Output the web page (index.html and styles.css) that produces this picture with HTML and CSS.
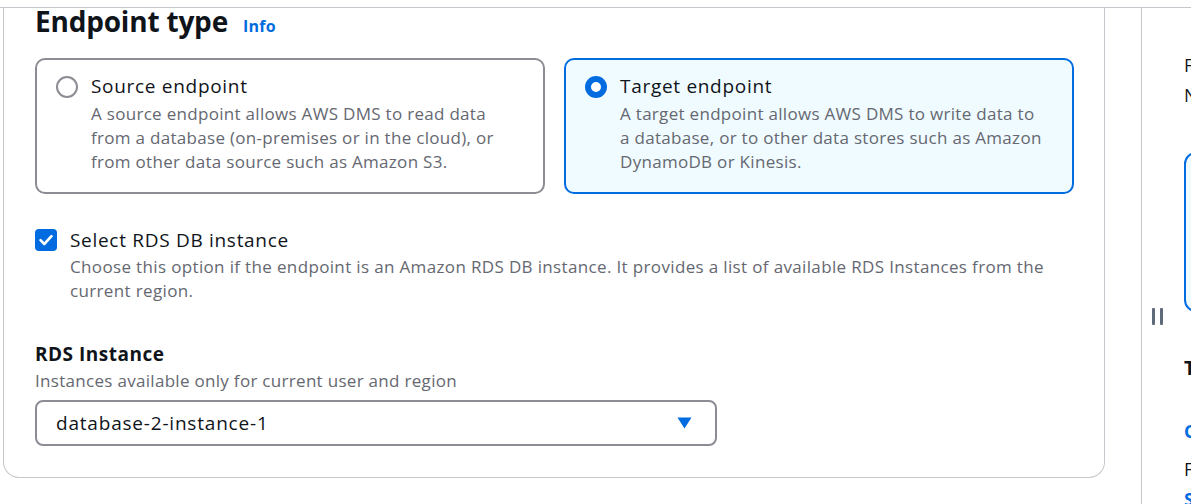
FILE: index.html
```html
<!DOCTYPE html>
<html lang="en">
<head>
<meta charset="utf-8">
<title>Endpoint type</title>
<link rel="stylesheet" href="styles.css">
</head>
<body>
<div class="page">
  <main class="main">
    <section class="container">
      <h2 class="heading">Endpoint type <a class="info" href="#">Info</a></h2>

      <div class="tiles">
        <label class="tile">
          <span class="radio"></span>
          <span class="tile-body">
            <span class="tile-title">Source endpoint</span>
            <span class="tile-desc">A source endpoint allows AWS DMS to read data from a database (on-premises or in the cloud), or from other data source such as Amazon S3.</span>
          </span>
        </label>
        <label class="tile tile-selected">
          <span class="radio radio-checked"></span>
          <span class="tile-body">
            <span class="tile-title">Target endpoint</span>
            <span class="tile-desc">A target endpoint allows AWS DMS to write data to a database, or to other data stores such as Amazon DynamoDB or Kinesis.</span>
          </span>
        </label>
      </div>

      <div class="check-row">
        <span class="checkbox">
          <svg width="22" height="22" viewBox="0 0 22 22"><path d="M5.5 11.2 L9.3 15 L16.5 7.2" fill="none" stroke="#ffffff" stroke-width="2.6" stroke-linecap="round" stroke-linejoin="round"/></svg>
        </span>
        <div class="check-body">
          <div class="check-label">Select RDS DB instance</div>
          <div class="check-desc">Choose this option if the endpoint is an Amazon RDS DB instance. It provides a list of available RDS Instances from the current region.</div>
        </div>
      </div>

      <div class="field">
        <div class="field-label">RDS Instance</div>
        <div class="field-desc">Instances available only for current user and region</div>
        <div class="select">
          <span class="select-value">database-2-instance-1</span>
          <svg class="caret" width="15" height="12" viewBox="0 0 15 12"><path d="M0.5 0.5 H14.5 L7.5 11.5 Z" fill="#006ce0"/></svg>
        </div>
      </div>
    </section>
  </main>

  <aside class="side">
    <span class="handle"><span class="bar"></span><span class="bar"></span></span>
    <div class="side-line side-first">Features</div>
    <div class="side-line">New</div>
    <div class="side-box"></div>
    <div class="side-title">Tags</div>
    <div class="side-link">Create</div>
    <div class="side-text">For</div>
    <div class="side-link side-last">See</div>
  </aside>
</div>
</body>
</html>
```

FILE: styles.css
```css
* { box-sizing: border-box; }

html, body {
  margin: 0;
  padding: 0;
  background: #ffffff;
}

body {
  font-family: "Open Sans", "Noto Sans", sans-serif;
  color: #0f141a;
  width: 1191px;
  height: 504px;
  overflow: hidden;
}

.page {
  margin-top: 7px;
  border-top: 1px solid #c6c6cd;
  display: grid;
  grid-template-columns: 1141px 50px;
  height: 497px;
}

.main {
  padding-left: 3px;
}

.container {
  width: 1102px;
  border: 1px solid #c6c6cd;
  border-top: none;
  border-radius: 0 0 16px 16px;
  padding: 0 30px 31px 31px;
}

.heading {
  margin: 0;
  font-size: 28px;
  line-height: 26px;
  font-weight: 700;
  letter-spacing: -0.2px;
}

.info {
  font-size: 16px;
  line-height: 1;
  font-weight: 700;
  color: #006ce0;
  text-decoration: none;
  margin-left: 8px;
  letter-spacing: 0.2px;
}

.tiles {
  margin-top: 24px;
  display: grid;
  grid-template-columns: 1fr 1fr;
  gap: 19px;
}

.tile {
  display: flex;
  gap: 13px;
  border: 2px solid #8c8c94;
  border-radius: 10px;
  padding: 14px 29px 18px 19px;
  background: #ffffff;
}

.tile-selected {
  border-color: #006ce0;
  background: #f0fbff;
}

.radio {
  flex: 0 0 22px;
  width: 22px;
  height: 22px;
  margin-top: 2px;
  border: 2px solid #8c8c94;
  border-radius: 50%;
  background: #ffffff;
}

.radio-checked {
  border: 6px solid #006ce0;
}

.tile-body {
  display: flex;
  flex-direction: column;
}

.tile-title {
  font-size: 19px;
  line-height: 24px;
  letter-spacing: 0.7px;
}

.tile-desc {
  margin-top: 4px;
  font-size: 17px;
  line-height: 24px;
  letter-spacing: 0.3px;
  color: #656871;
}

.check-row {
  margin-top: 34px;
  display: flex;
  gap: 13px;
}

.checkbox {
  flex: 0 0 22px;
  width: 22px;
  height: 22px;
  margin-top: 1px;
  background: #006ce0;
  border-radius: 4px;
  display: block;
}

.checkbox svg { display: block; }

.check-label {
  font-size: 19px;
  line-height: 24px;
  letter-spacing: 0.7px;
}

.check-desc {
  margin-top: 3px;
  font-size: 17px;
  line-height: 24px;
  letter-spacing: 0.35px;
  color: #656871;
}

.field {
  margin-top: 39px;
}

.field-label {
  font-size: 19px;
  line-height: 24px;
  font-weight: 700;
  letter-spacing: 0.5px;
}

.field-desc {
  margin-top: 3px;
  font-size: 17px;
  line-height: 24px;
  letter-spacing: 0.3px;
  color: #656871;
}

.select {
  margin-top: 7px;
  width: 682px;
  height: 46px;
  border: 2px solid #8c8c94;
  border-radius: 8px;
  padding: 0 23px 0 19px;
  display: flex;
  align-items: center;
  justify-content: space-between;
}

.select-value {
  font-size: 19px;
  line-height: 24px;
  letter-spacing: 0.8px;
}

.caret { display: block; }

.side {
  position: relative;
  border-left: 1px solid #c6c6cd;
  padding-left: 42px;
  overflow: hidden;
  white-space: nowrap;
}

.handle {
  position: absolute;
  left: 10px;
  top: 300px;
  display: flex;
  gap: 5px;
}

.bar {
  width: 3px;
  height: 17px;
  background: #5f6b7a;
  border-radius: 1px;
}

.side-line {
  font-size: 18px;
  line-height: 30px;
}

.side-first {
  margin-top: 42px;
}

.side-box {
  margin-top: 42px;
  width: 200px;
  height: 160px;
  border: 2px solid #006ce0;
  border-radius: 12px;
  background: #f0fbff;
}

.side-title {
  margin-top: 42px;
  font-size: 20px;
  line-height: 28px;
  font-weight: 700;
}

.side-link {
  margin-top: 37px;
  font-size: 18px;
  line-height: 24px;
  color: #006ce0;
  font-weight: 700;
}

.side-text {
  margin-top: 14px;
  font-size: 18px;
  line-height: 24px;
}

.side-last {
  margin-top: 6px;
}
```
